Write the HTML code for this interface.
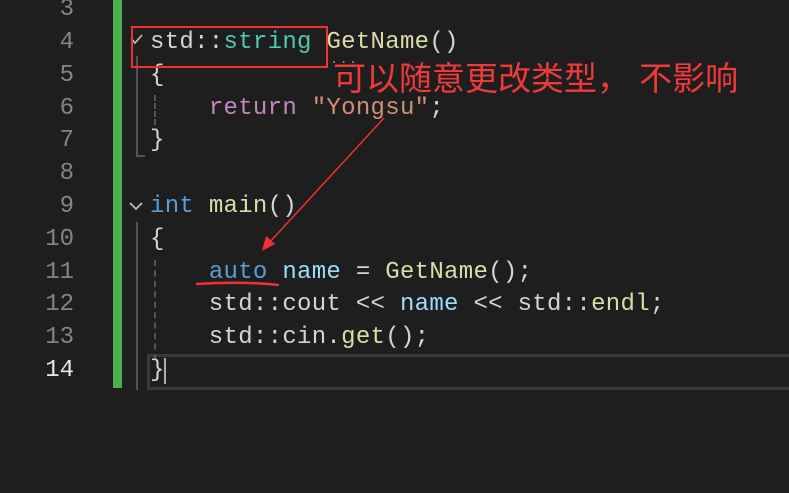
<!DOCTYPE html>
<html><head><meta charset="utf-8"><style>
body{margin:0;width:789px;height:493px;background:#1e1e1e;overflow:hidden;position:relative;font-family:"Liberation Mono",monospace;}
.ln{position:absolute;left:0;width:74px;text-align:right;font-size:24px;color:#858585;line-height:33px;}
.c{position:absolute;left:150px;font-size:24px;letter-spacing:0.3px;color:#d4d4d4;line-height:33px;white-space:pre;}
.t{color:#4ec9b0}.f{color:#dcdcaa}.k{color:#c586c0}.s{color:#ce9178}.b{color:#569cd6}.v{color:#9cdcfe}
</style></head><body>
<div style="position:absolute;left:113px;top:0;width:9px;height:388px;background:#4caf50"></div>
<div style="position:absolute;left:147px;top:354px;width:650px;height:30px;border:3px solid #3a3a3a;border-right:none"></div>
<div style="position:absolute;left:164px;top:358px;width:2px;height:26px;background:#aeafad"></div>
<div class="ln" style="top:-7px">3</div>
<div class="ln" style="top:26px">4</div>
<div class="ln" style="top:59px">5</div>
<div class="ln" style="top:92px">6</div>
<div class="ln" style="top:124px">7</div>
<div class="ln" style="top:157px">8</div>
<div class="ln" style="top:190px">9</div>
<div class="ln" style="top:223px">10</div>
<div class="ln" style="top:256px">11</div>
<div class="ln" style="top:288px">12</div>
<div class="ln" style="top:321px">13</div>
<div class="ln" style="top:354px;color:#e8e8e8">14</div>
<div style="position:absolute;left:136px;top:56px;width:2px;height:100px;background:#555"></div>
<div style="position:absolute;left:136px;top:155px;width:9px;height:2px;background:#555"></div>
<div style="position:absolute;left:136px;top:222px;width:2px;height:168px;background:#555"></div>
<div style="position:absolute;left:154px;top:95px;width:0;height:30px;border-left:2px dashed #555"></div>
<div style="position:absolute;left:154px;top:260px;width:0;height:100px;border-left:2px dashed #555"></div>
<svg style="position:absolute;left:129px;top:34px" width="16" height="200"><path d="M2 4 L6 9 L13 1" stroke="#c5c5c5" stroke-width="1.6" fill="none"/><path d="M1 169 L7 175 L13 169" stroke="#c5c5c5" stroke-width="1.6" fill="none"/></svg>
<div class="c" style="top:26px">std::<span class="t">string</span> <span class="f">GetName</span>()</div>
<div style="position:absolute;left:330px;top:52px;color:#888;font-size:14px;letter-spacing:1px">...</div>
<div class="c" style="top:59px">{</div>
<div class="c" style="top:92px">    <span class="k">return</span> <span class="s">"Yongsu"</span>;</div>
<div class="c" style="top:124px">}</div>
<div class="c" style="top:190px"><span class="b">int</span> <span class="f">main</span>()</div>
<div class="c" style="top:223px">{</div>
<div class="c" style="top:256px">    <span class="b">auto</span> <span class="v">name</span> = <span class="f">GetName</span>();</div>
<div class="c" style="top:288px">    std::cout &lt;&lt; <span class="v">name</span> &lt;&lt; std::<span class="f">endl</span>;</div>
<div class="c" style="top:321px">    std::cin.<span class="f">get</span>();</div>
<div class="c" style="top:354px">}</div>
<div style="position:absolute;left:131px;top:26px;width:193px;height:38px;border:2px solid #f03030"></div>
<div style="position:absolute;left:333px;top:58px;font-family:'Liberation Sans','Noto Sans CJK SC',sans-serif;font-size:33px;color:#f03a3a;line-height:42px;white-space:pre">可以随意更改类型， 不影响</div>
<svg style="position:absolute;left:0;top:0" width="789" height="493"><line x1="384" y1="118" x2="268" y2="244" stroke="#f03030" stroke-width="1.5"/><path d="M262 251 L266 236 L275 244 Z" fill="#f03030"/><path d="M196 284 Q240 281 279 285" stroke="#f03030" stroke-width="2.5" fill="none"/></svg>
</body></html>
